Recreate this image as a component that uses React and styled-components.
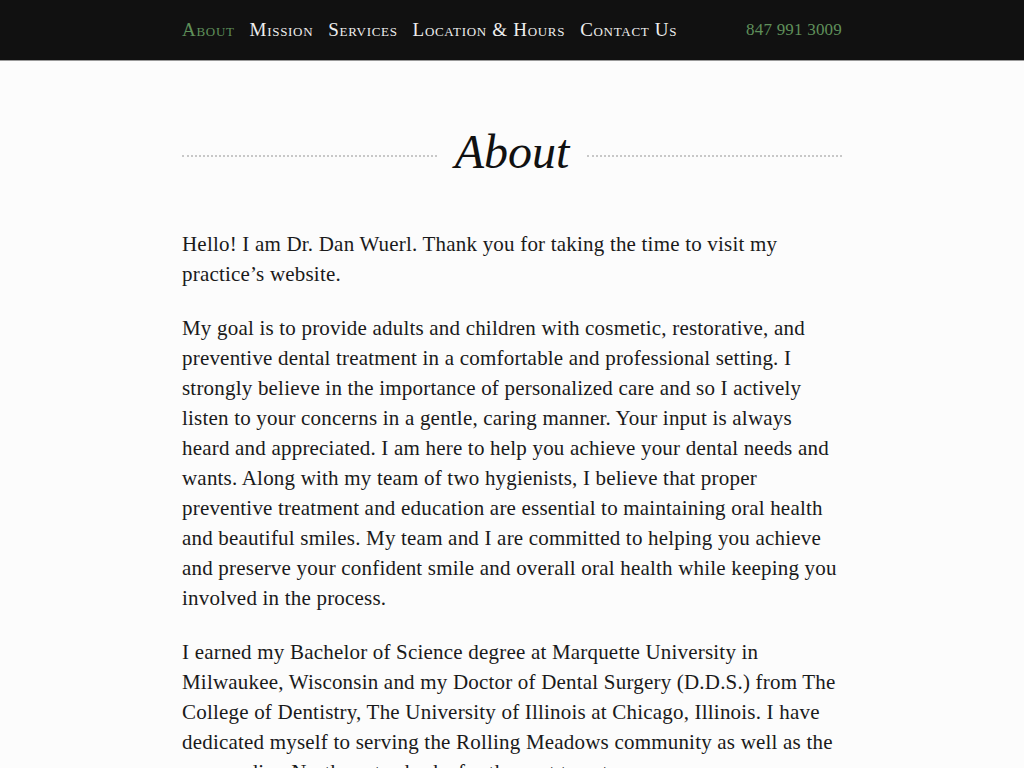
import styled, { createGlobalStyle } from 'styled-components'

const GlobalStyle = createGlobalStyle`
  body {
    margin: 0;
    background: #fcfcfc;
    font-family: "Liberation Serif", "DejaVu Serif", serif;
    color: #111;
  }
`

const Header = styled.header`
  background: #111;
  height: 60px;
  border-bottom: 1px solid #9a9a9a;
`
const HeaderInner = styled.div`
  width: 660px;
  margin: 0 auto;
  height: 100%;
  display: flex;
  align-items: center;
  justify-content: space-between;
`
const Nav = styled.nav`
  display: flex;
  gap: 15px;
`
const NavLink = styled.a`
  font-family: "Liberation Serif", serif;
  font-variant: small-caps;
  font-size: 19px;
  letter-spacing: 0.7px;
  color: ${p => (p.$active ? '#5f8f5a' : '#eee')};
  text-decoration: none;
`
const Phone = styled.span`
  font-size: 17px;
  letter-spacing: 0.2px;
  color: #5f8f5a;
`
const Main = styled.main`
  width: 660px;
  margin: 0 auto;
  padding-top: 61px;
`
const TitleRow = styled.div`
  display: flex;
  align-items: center;
  gap: 18px;
  margin-bottom: 47px;
`
const Dots = styled.span`
  flex: 1;
  height: 0;
  border-top: 2px dotted #c8c8c8;
  margin-top: 8px;
`
const Title = styled.h1`
  margin: 0;
  font-style: italic;
  font-weight: normal;
  font-size: 48px;
  line-height: 60px;
  color: #111;
`
const Para = styled.p`
  margin: 0 0 24px;
  font-size: 21px;
  line-height: 30px;
  letter-spacing: 0.2px;
  color: #1a1a1a;
`

const links = ['About', 'Mission', 'Services', 'Location & Hours', 'Contact Us']

export default function App() {
  return (
    <>
      <GlobalStyle />
      <Header>
        <HeaderInner>
          <Nav>
            {links.map((l, i) => (
              <NavLink key={l} href="#" $active={i === 0}>{l}</NavLink>
            ))}
          </Nav>
          <Phone>847 991 3009</Phone>
        </HeaderInner>
      </Header>
      <Main>
        <TitleRow>
          <Dots />
          <Title>About</Title>
          <Dots />
        </TitleRow>
        <Para>
          Hello! I am Dr. Dan Wuerl. Thank you for taking the time to visit my practice’s website.
        </Para>
        <Para>
          My goal is to provide adults and children with cosmetic, restorative, and preventive dental
          treatment in a comfortable and professional setting. I strongly believe in the importance of
          personalized care and so I actively listen to your concerns in a gentle, caring manner. Your
          input is always heard and appreciated. I am here to help you achieve your dental needs and
          wants. Along with my team of two hygienists, I believe that proper preventive treatment and
          education are essential to maintaining oral health and beautiful smiles. My team and I are
          committed to helping you achieve and preserve your confident smile and overall oral health
          while keeping you involved in the process.
        </Para>
        <Para>
          I earned my Bachelor of Science degree at Marquette University in Milwaukee, Wisconsin and my
          Doctor of Dental Surgery (D.D.S.) from The College of Dentistry, The University of Illinois at
          Chicago, Illinois. I have dedicated myself to serving the Rolling Meadows community as well as
          the surrounding Northwest suburbs for the past twenty years.
        </Para>
      </Main>
    </>
  )
}
